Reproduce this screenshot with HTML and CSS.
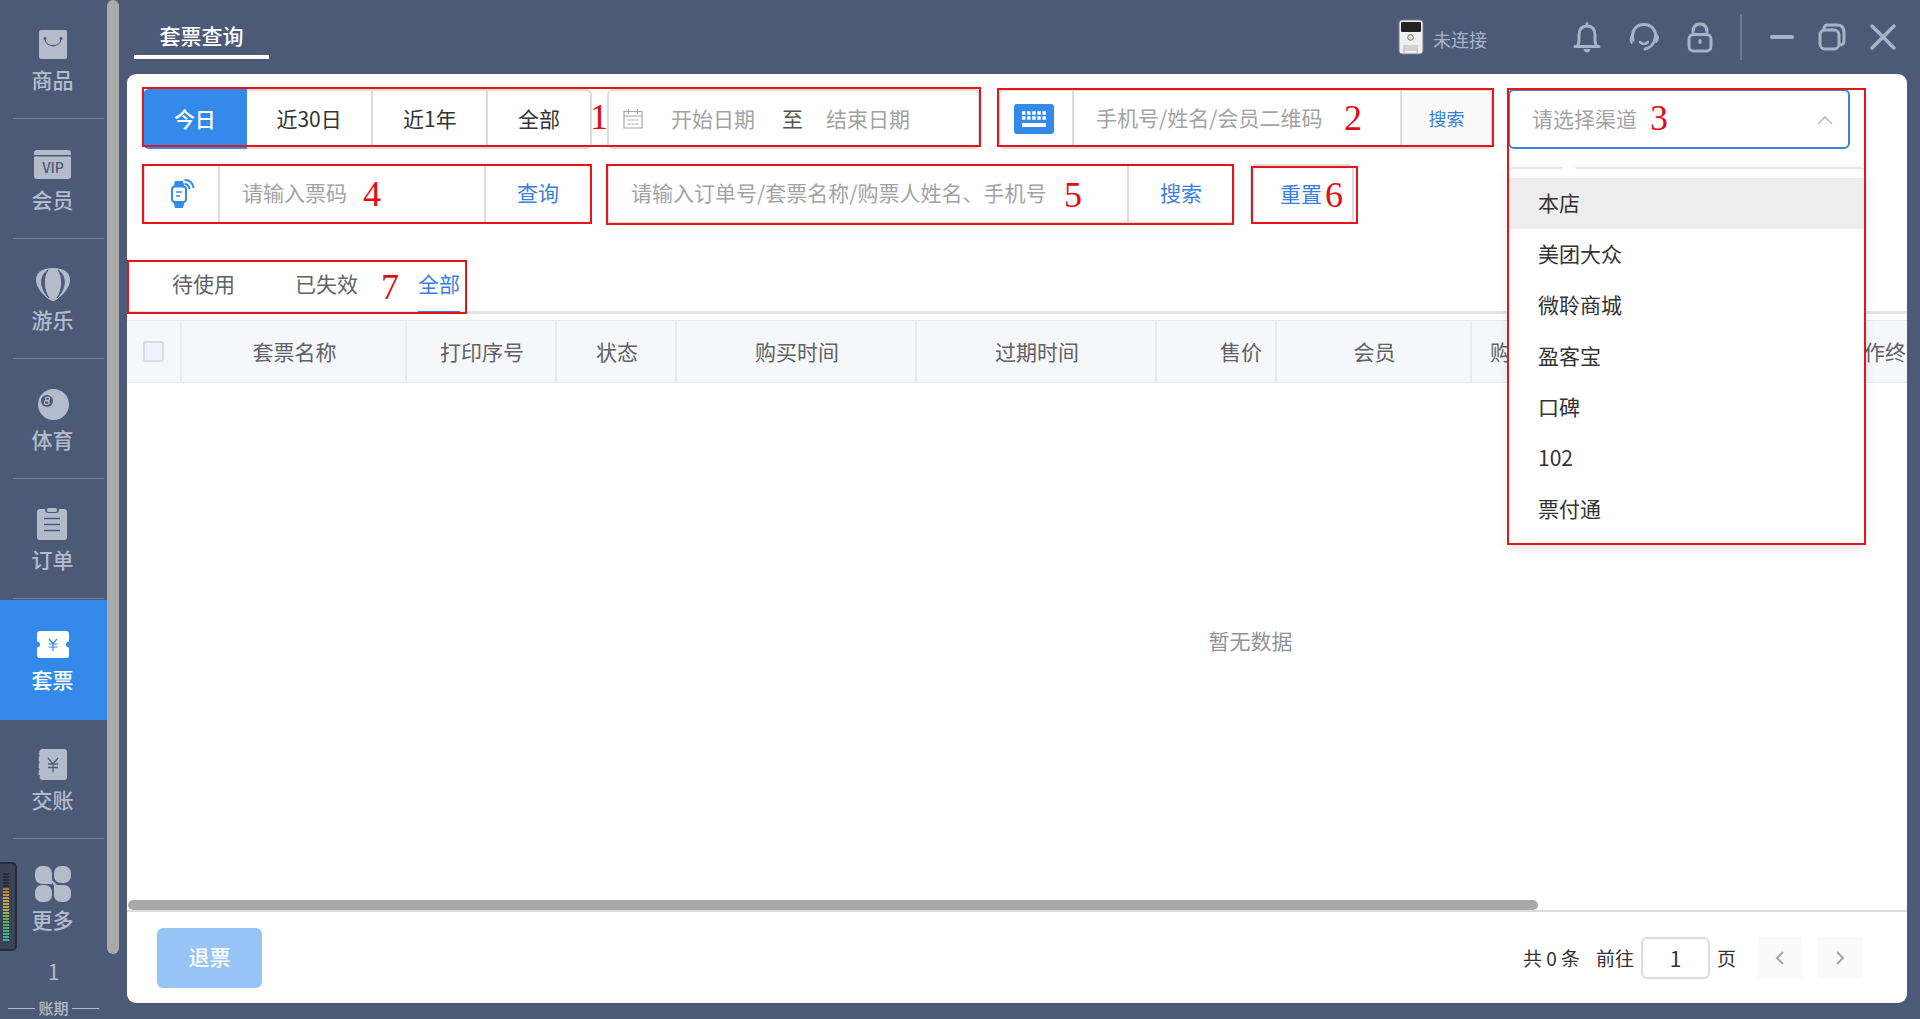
FILE: index.html
```html
<!DOCTYPE html>
<html lang="zh-CN">
<head>
<meta charset="utf-8">
<meta name="viewport" content="width=device-width, initial-scale=1">
<title>套票查询</title>
<link rel="stylesheet" href="styles.css">
</head>
<body>
<div class="app">
  <aside class="sidebar">
    <nav class="menu">
      <a class="menu-item" href="#goods">
        <svg class="menu-icon" viewBox="0 0 40 40"><rect x="6" y="5" width="28" height="29" rx="2" fill="currentColor"/><path d="M12 14c1 9 15 9 16 0" fill="none" stroke="#4c5a78" stroke-width="1.3"/><circle cx="12" cy="13.500" r="1.500" fill="#4c5a78"/><circle cx="28" cy="13.500" r="1.500" fill="#4c5a78"/></svg>
        <span>商品</span></a>
      <a class="menu-item" href="#member">
        <svg class="menu-icon" viewBox="0 0 40 40"><path d="M1 10V8a3 3 0 0 1 3-3h31a3 3 0 0 1 3 3v2zM1 11.500h37V31a3 3 0 0 1-3 3H4a3 3 0 0 1-3-3z" fill="currentColor"/><text x="20" y="27.500" class="icon-vip">VIP</text></svg>
        <span>会员</span></a>
      <a class="menu-item" href="#play">
        <svg class="menu-icon" viewBox="0 0 40 40"><path d="M20 3c12 0 17 5 17 12 0 8-8 16-14 20q-3 2-6 0C11 31 3 23 3 15 3 8 8 3 20 3z" fill="currentColor"/><path d="M15 5c-5 6-5 20 1 28C8 25 5 12 15 5zM25 5c5 6 5 20-1 28 8-8 11-21 1-28z" fill="#4c5a78" stroke="#4c5a78"/></svg>
        <span>游乐</span></a>
      <a class="menu-item" href="#sports">
        <svg class="menu-icon" viewBox="0 0 40 40"><circle cx="20.500" cy="19.500" r="15.500" fill="currentColor"/><circle cx="14" cy="16" r="6" fill="#4c5a78"/><g fill="none" stroke="currentColor" stroke-width="1.300"><ellipse cx="14.600" cy="13.900" rx="2" ry="1.700"/><ellipse cx="13.700" cy="17.600" rx="2.400" ry="2"/></g></svg>
        <span>体育</span></a>
      <a class="menu-item" href="#orders">
        <svg class="menu-icon" viewBox="0 0 40 40"><path d="M7 4h5c0 3 1 4 3 4h8c2 0 3-1 3-4h5a3 3 0 0 1 3 3v25a3 3 0 0 1-3 3H7a3 3 0 0 1-3-3V7a3 3 0 0 1 3-3z" fill="currentColor"/><rect x="14" y="3" width="10" height="4" rx="1.500" fill="currentColor"/><path d="M11 13.500h16M11 19.500h16M11 25.500h16" stroke="#4c5a78" stroke-width="1.500"/></svg>
        <span>订单</span></a>
      <a class="menu-item active" href="#package" aria-current="page">
        <svg class="menu-icon" viewBox="0 0 40 40"><path d="M7 6h26a3 3 0 0 1 3 3v7.500a3 3 0 0 0 0 6V30a3 3 0 0 1-3 3H7a3 3 0 0 1-3-3v-7.500a3 3 0 0 0 0-6V9a3 3 0 0 1 3-3z" fill="currentColor"/><path d="M16 14l4 4.500 4-4.500M15.500 19h9M15.500 22h9M20 18.500V26" fill="none" stroke="#338aeb" stroke-width="1.200"/></svg>
        <span>套票</span></a>
      <a class="menu-item" href="#shift">
        <svg class="menu-icon" viewBox="0 0 40 40"><path d="M9 4h22a3 3 0 0 1 3 3v25a3 3 0 0 1-3 3H9a3 3 0 0 1-2.500-3q1.500-1 0-2h-.8v-4q1.800-1.500 0-3v-4q1.800-1.500 0-3v-4q1.800-1.500 0-3l.8-1A3 3 0 0 1 9 4z" fill="currentColor"/><path d="M15 13l5 6 5-6M15 19h10M15 22.500h10M20 19v8" fill="none" stroke="#4c5a78" stroke-width="1.300"/></svg>
        <span>交账</span></a>
      <a class="menu-item last" href="#more">
        <svg class="menu-icon" viewBox="0 0 40 40"><g fill="currentColor"><path d="M9 1h3a7 7 0 0 1 7 7v11H9a7 7 0 0 1-7-7V8a7 7 0 0 1 7-7z"/><path d="M28 1h3a7 7 0 0 1 7 7v3a7 7 0 0 1-7 7h-3a7 7 0 0 1-7-7V8a7 7 0 0 1 7-7z"/><path d="M9 20h3a7 7 0 0 1 7 7v3a7 7 0 0 1-7 7H9a7 7 0 0 1-7-7v-3a7 7 0 0 1 7-7z"/><path d="M21 20h10a7 7 0 0 1 7 7v3a7 7 0 0 1-7 7h-3a7 7 0 0 1-7-7z"/><path d="M16 14l8 10v-4l-4-4z"/></g></svg>
        <span>更多</span></a>
    </nav>
    <div class="period"><span class="period-value">1</span><span class="period-label">账期</span></div>
    <div class="side-scroll"></div>
    <div class="meter"><div class="meter-bars"></div></div>
  </aside>

  <main class="main">
    <header class="topbar">
      <h1 class="page-tab">套票查询</h1>
      <div class="device">
        <svg width="26" height="36" viewBox="0 0 26 36"><rect x="1" y="1" width="24" height="34" rx="3" fill="#f0f0f0" stroke="#777c86"/><rect x="3" y="3" width="20" height="10" rx="1" fill="#222"/><circle cx="12.500" cy="18.500" r="2.800" fill="#e4e4e4" stroke="#666" stroke-width="1"/><path d="M6 26v7.500M19 26v7.500" stroke="#aaa"/><rect x="6.500" y="26" width="12" height="6" fill="#d2d2d2"/></svg>
        <span>未连接</span>
      </div>
      <div class="tools">
        <button class="tool" aria-label="消息"><svg width="28" height="32" viewBox="0 0 28 32"><path d="M2 25.500h24M4.500 25c2-3 1.500-6 1.500-11 0-6 3-9 8-9s8 3 8 9c0 5-.5 8 1.500 11M14 2.500v2"/><path d="M10.500 28h7q-1 3.500-3.500 3.500T10.500 28z" fill="currentColor" stroke="none"/></svg></button>
        <button class="tool" aria-label="客服"><svg width="30" height="32" viewBox="0 0 30 32"><path d="M4 19C2 10 7 3.500 15 3.500S28 10 26 18c-1 5-5 9-10 10"/><path d="M11 21q4 4 8 0" stroke-width="2.500"/><path d="M3 13v10q-4-4 0-10zM27 12v10q5-5 0-10z" fill="currentColor" stroke-width="1"/></svg></button>
        <button class="tool" aria-label="锁屏"><svg width="26" height="32" viewBox="0 0 26 32"><rect x="2" y="13.500" width="22" height="16.500" rx="4.500"/><path d="M6 11q0-8 7-8t7 8M13 19.500v2"/></svg></button>
      </div>
      <div class="window-tools">
        <button class="tool" aria-label="最小化"><svg width="26" height="30" viewBox="0 0 26 30"><path d="M3 15h20" stroke-width="4"/></svg></button>
        <button class="tool" aria-label="还原"><svg width="28" height="30" viewBox="0 0 28 30"><rect x="2" y="8" width="19" height="19" rx="5"/><path d="M9 3h10q7 0 7 7v9q0 3-3 4M9 3q-2 0-3 3"/></svg></button>
        <button class="tool" aria-label="关闭"><svg width="28" height="30" viewBox="0 0 28 30"><path d="M3 4l22 22M25 4L3 26" stroke-width="3.500"/></svg></button>
      </div>
    </header>

    <section class="panel">
      <div class="filters">
        <div class="filter-row">
          <div class="date-filter">
            <div class="ranges">
              <button class="range on">今日</button><button class="range range-l">近30日</button><button class="range range-m">近1年</button><button class="range">全部</button>
            </div>
            <div class="box dates">
              <svg width="20" height="20" viewBox="0 0 20 20" fill="none" stroke="#a8a8a8" stroke-width="1.200"><path d="M1 2.500h18v16.500H1zM1 7h18M5.500 0v5M14.500 0v5"/><path d="M4.500 11h11M4.500 15h11" stroke-dasharray="3 1"/></svg>
              <input class="date" type="text" placeholder="开始日期" aria-label="开始日期">
              <span class="to">至</span>
              <input class="date" type="text" placeholder="结束日期" aria-label="结束日期">
            </div>
            <div class="mark mark-1">1</div>
          </div>
          <div class="box member">
            <button class="prefix keyboard" aria-label="键盘"><svg width="40" height="30" viewBox="0 0 40 30"><rect width="40" height="30" rx="3" fill="#338aeb"/><path d="M8 9h24M8 14h24" stroke="#fff" stroke-width="3.500" stroke-dasharray="3.500 1.600"/><path d="M8 21h24" stroke="#fff" stroke-width="4"/></svg></button>
            <input class="field" type="text" placeholder="手机号/姓名/会员二维码" aria-label="会员">
            <button class="suffix small">搜索</button>
            <div class="mark mark-2">2</div>
          </div>
          <div class="channel">
            <select class="channel-select" aria-label="渠道"><option>请选择渠道</option></select>
            <svg class="caret" width="16" height="10" viewBox="0 0 16 10"><path d="M1 9l7-7 7 7" fill="none" stroke="#b0b3b8" stroke-width="1.300"/></svg>
            <ul class="options" role="listbox">
              <li class="option hover" role="option">本店</li><li class="option" role="option">美团大众</li><li class="option" role="option">微聆商城</li><li class="option" role="option">盈客宝</li><li class="option" role="option">口碑</li><li class="option" role="option">102</li><li class="option" role="option">票付通</li>
            </ul>
            <div class="mark mark-3">3</div>
          </div>
        </div>
        <div class="filter-row">
          <div class="box ticket">
            <button class="prefix" aria-label="手环"><svg width="26" height="30" viewBox="0 0 26 30"><path d="M6 2h8l1.500 6h-11zM4.500 23h11L14 29H6z" fill="#338aeb"/><rect x="3" y="7.500" width="14" height="15.500" rx="3" fill="#fff" stroke="#338aeb" stroke-width="2"/><path d="M7 13h6M7 17h4" stroke="#338aeb" stroke-width="1.500"/><path d="M15.500 5q4 0 5 5M15.500 1q8 0 9 8" fill="none" stroke="#338aeb" stroke-width="2"/></svg></button>
            <input class="field" type="text" placeholder="请输入票码" aria-label="票码">
            <button class="suffix">查询</button>
            <div class="mark mark-4">4</div>
          </div>
          <div class="box order">
            <input class="field" type="text" placeholder="请输入订单号/套票名称/购票人姓名、手机号" aria-label="订单">
            <button class="suffix">搜索</button>
            <div class="mark mark-5">5</div>
          </div>
          <div class="box reset">
            <button class="reset-button">重置</button>
            <div class="mark mark-6">6</div>
          </div>
        </div>
      </div>

      <div class="tabs">
        <button class="tab">待使用</button><button class="tab">已失效</button><button class="tab on">全部</button>
        <div class="mark mark-7">7</div>
      </div>

      <div class="table-wrap">
        <table class="table">
          <colgroup><col class="c54"><col class="c225"><col class="c150"><col class="c120"><col class="c240"><col class="c240"><col class="c120"><col class="c195"><col class="c120"><col class="c175"><col class="c240"><col></colgroup>
          <thead><tr>
            <th><input class="check" type="checkbox" aria-label="全选"></th><th>套票名称</th><th>打印序号</th><th>状态</th><th>购买时间</th><th>过期时间</th><th class="right">售价</th><th>会员</th><th>购买渠道</th><th></th><th>操作终端</th><th></th>
          </tr></thead>
        </table>
        <div class="empty">暂无数据</div>
      </div>
      <div class="table-scroll"><div class="table-thumb"></div></div>

      <footer class="footer">
        <button class="refund">退票</button>
        <div class="pager">
          <span>共 0 条</span>
          <label class="jump">前往 <input class="page" type="text" value="1"> 页</label>
          <button class="step" aria-label="上一页"><svg width="10" height="16" viewBox="0 0 10 16"><path d="M8 2L2 8l6 6"/></svg></button>
          <button class="step" aria-label="下一页"><svg width="10" height="16" viewBox="0 0 10 16"><path d="M2 2l6 6-6 6"/></svg></button>
        </div>
      </footer>
    </section>
  </main>
</div>
</body>
</html>
```
FILE: styles.css
```css
* { box-sizing: border-box; }
body {
  margin: 0;
  background: #4c5a78;
  color: #606266;
  font: 21px/30px "Noto Sans CJK SC", sans-serif;
}
button, input, select { font: inherit; color: inherit; margin: 0; padding: 0; border: 0; background: none; }
input { min-width: 0; }
input::placeholder { color: #a3a3a3; opacity: 1; }
svg { display: block; flex: none; }

.app { display: flex; height: 100vh; overflow: hidden; }

/* sidebar */
.sidebar { position: relative; flex: none; width: 119px; overflow: hidden; color: #b4bccc; }
.menu { width: 107px; }
.menu-item {
  display: flex; flex-direction: column; align-items: center;
  height: 120px; padding: 25px 2px 0 0;
  color: inherit; text-decoration: none; font-weight: 500; line-height: 28px;
  background: linear-gradient(#71809c, #71809c) 13px 118px / 91px 1px no-repeat;
}
.menu-item.active { background: #338aeb; color: #fff; }
.menu-item.last { background: none; }
.menu-icon { width: 40px; height: 40px; }
.icon-vip { font: 500 14px "Noto Sans CJK SC", sans-serif; fill: #4c5a78; text-anchor: middle; }
.period { display: flex; flex-direction: column; align-items: center; width: 107px; }
.period-value { height: 38px; line-height: 22px; }
.period-label { display: flex; align-items: center; gap: 3px; font-size: 15px; line-height: 20px; font-weight: 500; }
.period-label::before, .period-label::after { content: ""; width: 27px; height: 1px; background: #b4bccc; }
.side-scroll { position: absolute; top: 0; right: 0; width: 12px; height: 954px; border-radius: 6px; background: #a9aaaa; }
.meter { position: absolute; left: -4px; top: 862px; width: 21px; height: 89px; padding: 9px 5px; border: 2px solid #252c3d; border-radius: 5px; background: #3a4358; }
.meter-bars {
  width: 6px; height: 68px;
  background:
    repeating-linear-gradient(transparent 0 2px, #3a4358 2px 3px),
    linear-gradient(#272d3c 0 14px, #b5763c 15px, #c9a043 26px, #a3b14c 38px, #5aae5c 50px, #2fb89e 68px);
}

/* top bar */
.main { flex: 1; min-width: 0; display: flex; flex-direction: column; padding: 0 13px 16px 8px; }
.topbar { display: flex; align-items: center; height: 74px; flex: none; color: #a9b3c7; }
.page-tab {
  align-self: flex-start; width: 135px; height: 59px; margin: 0 auto 0 7px; padding-top: 20px;
  border-bottom: 4px solid #fff; color: #fff; font-size: 21px; line-height: 30px; font-weight: 500; text-align: center;
}
.device { display: flex; align-items: center; gap: 9px; margin-right: 86px; font-size: 18px; line-height: 26px; }
.device span { padding-top: 4px; }
.tools { display: flex; gap: 28px; padding-right: 27px; border-right: 2px solid #6c7a96; height: 46px; align-items: center; }
.window-tools { display: flex; align-items: center; gap: 23px; padding: 0 10px 0 27px; }
.tool svg { fill: none; stroke: currentColor; stroke-width: 3; stroke-linecap: round; stroke-linejoin: round; }

/* panel */
.panel { flex: 1; min-height: 0; display: flex; flex-direction: column; border-radius: 9px; background: #fff; overflow: hidden; }
.filters { display: flex; flex-direction: column; gap: 15px; padding: 15px 16px 36px; }
.filter-row { display: flex; gap: 15px; height: 60px; }
.date-filter { position: relative; display: flex; gap: 15px; padding-right: 3px; }
.ranges { display: flex; width: 449px; border: 2px solid #dcdcdc; border-left: 0; border-radius: 6px; }
.range { width: 104px; padding-bottom: 3px; color: #333; border-left: 2px solid #dcdcdc; }
.range-l { width: 125px; border-left: 0; }
.range-m { width: 115px; }
.range.on { margin: -2px 0; border: 0; border-radius: 6px 0 0 6px; background: #338aeb; color: #fff; font-weight: 500; }
.box { position: relative; display: flex; align-items: stretch; border: 2px solid #dcdcdc; border-radius: 6px; }
.dates { width: 373px; align-items: center; padding: 0 14px; color: #555; }
.date { width: 84px; margin-left: 28px; }
.date, .to { padding-bottom: 3px; }
.to { margin: 0 -5px 0 27px; }
.member { width: 495px; }
.ticket { width: 449px; }
.order { width: 628px; }
.reset { width: 104px; }
.prefix { display: flex; align-items: center; justify-content: center; flex: none; width: 75px; border-right: 2px solid #dcdcdc; }
.keyboard { width: 74px; padding-right: 5px; }
.field { flex: 1; padding: 0 0 4px 22px; }
.suffix { flex: none; width: 106px; padding-bottom: 4px; border-left: 2px solid #dcdcdc; color: #3b7fdd; }
.suffix.small { width: 91px; padding-bottom: 2px; background: #fafafa; font-size: 18px; }
.reset-button { flex: 1; padding: 0 2px 3px 0; color: #3b7fdd; }

/* channel drop-down */
.channel { position: relative; width: 342px; }
.channel-select { appearance: none; width: 100%; height: 60px; padding: 0 22px 3px; border: 2px solid #3d84d6; border-radius: 6px; color: #a3a3a3; }
.caret { position: absolute; right: 17px; top: 26px; }
.options {
  position: absolute; z-index: 2; left: 0; top: 78px; width: 357px; margin: 0; padding: 9px 0 10px; list-style: none;
  border: 2px solid #e7e7e7; border-width: 2px 0 0; border-radius: 5px; background: #fff; box-shadow: 0 4px 12px rgba(0, 0, 0, 0.1); color: #333;
}
.options::before {
  content: ""; position: absolute; left: 52px; top: -8px; width: 18px; height: 9px;
  background: #fff; clip-path: polygon(50% 0, 100% 100%, 0 100%);
}
.option { height: 51px; padding-left: 30px; line-height: 48px; }
.option.hover { background: #ededed; }

/* numbered call-outs */
.mark {
  position: absolute; z-index: 3; display: flex; align-items: center; pointer-events: none;
  border: 2px solid #e6151a; color: #e00d14; font: 36px/56px "Liberation Serif", serif;
}
.mark-1 { inset: -2px 2px 2px -1px; padding-left: 446px; }
.mark-2 { inset: -3px -3px 0 -3px; padding-left: 345px; }
.mark-3 { left: -1px; top: -1px; width: 359px; height: 457px; align-items: flex-start; padding-left: 141px; }
.mark-4 { inset: -2px -2px -2px -3px; padding-left: 219px; }
.mark-5 { inset: -2px -1px -3px -3px; padding-left: 456px; }
.mark-6 { inset: 0 -6px -2px -1px; padding-left: 72px; }
.mark-7 { left: 0; top: 0; width: 340px; height: 54px; padding-left: 252px; }

/* tabs */
.tabs { position: relative; display: flex; gap: 60px; height: 54px; flex: none; padding-left: 45px; border-bottom: 3px solid #e2e4ec; }
.tab { height: 54px; padding-bottom: 9px; }
.tab.on { border-bottom: 3px solid #3b7fdd; padding-bottom: 6px; color: #3b7fdd; }

/* table */
.table-wrap { flex: 1; min-height: 0; display: flex; flex-direction: column; margin-top: 6px; overflow: hidden; }
.table { width: 2247px; table-layout: fixed; border-collapse: separate; border-spacing: 0; }
.table th {
  height: 63px; padding: 0 13px 2px 15px; border: solid #e9ebf0; border-width: 1px 2px 1px 0;
  background: #f5f7fa; font-weight: 400; text-align: center; white-space: nowrap;
}
.table th.right { text-align: right; }
.c54 { width: 55px; } .c120 { width: 120px; } .c150 { width: 150px; } .c175 { width: 173px; }
.c195 { width: 195px; } .c225 { width: 225px; } .c240 { width: 240px; }
.check { appearance: none; display: block; width: 21px; height: 21px; margin: 2px 0 0 1px; border: 2px solid #d8dce5; border-radius: 3px; background: #edf2fc; }
.empty { flex: 1; display: flex; align-items: center; justify-content: center; width: 2247px; padding-bottom: 4px; color: #909399; }
.table-scroll { flex: none; height: 12px; padding-left: 1px; border-bottom: 2px solid #dcdcdc; }
.table-thumb { width: calc(79% + 5px); height: 10px; border-radius: 5px; background: #a9a9a9; }

/* footer */
.footer { display: flex; align-items: center; justify-content: space-between; height: 91px; flex: none; padding: 0 45px 0 30px; }
.refund { width: 105px; height: 60px; padding-bottom: 3px; border-radius: 6px; background: #98c4f5; color: #fff; font-weight: 500; }
.pager { display: flex; align-items: center; gap: 16px; color: #333; font-size: 19px; }
.jump { display: flex; align-items: center; gap: 7px; margin-right: 6px; }
.page { width: 69px; height: 42px; border: 2px solid #dcdcdc; border-radius: 6px; text-align: center; font-size: 21px; }
.step { display: flex; align-items: center; justify-content: center; width: 44px; height: 41px; background: #fafafa; }
.step svg { fill: none; stroke: #a5a5a5; stroke-width: 2; }
```
